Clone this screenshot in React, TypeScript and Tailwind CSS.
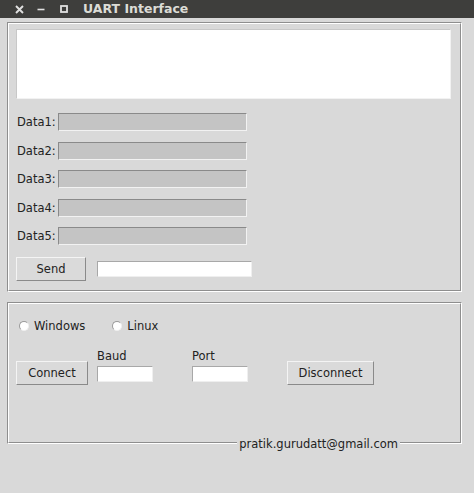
const font = { fontFamily: '"DejaVu Sans", Verdana, sans-serif' };

function Groove({ className = "", children }: { className?: string; children: React.ReactNode }) {
  return (
    <div className={`relative border border-t-[#8e8e8e] border-l-[#8e8e8e] border-b-white border-r-white ${className}`}>
      <div className="h-full border border-t-white border-l-white border-b-[#8e8e8e] border-r-[#8e8e8e]">{children}</div>
    </div>
  );
}

function DataRow({ label }: { label: string }) {
  return (
    <div className="flex items-center h-[18px]">
      <span className="w-[42px] pl-[1px] leading-[14px]">{label}</span>
      <div className="w-[189px] h-[18px] bg-[#c4c4c4] border border-t-[#8a8a8a] border-l-[#8a8a8a] border-b-[#f2f2f2] border-r-[#f2f2f2]" />
    </div>
  );
}

function TkButton({ label, w }: { label: string; w: string }) {
  return (
    <button
      className={`${w} h-[24px] shrink-0 bg-[#dadada] border border-t-[#f4f4f4] border-l-[#f4f4f4] border-b-[#8a8a8a] border-r-[#8a8a8a] text-[#222] leading-[14px]`}
    >
      {label}
    </button>
  );
}

function WhiteEntry({ w, h }: { w: string; h: string }) {
  return <div className={`${w} ${h} bg-white border border-t-[#a8a8a8] border-l-[#a8a8a8] border-b-[#efefef] border-r-[#efefef]`} />;
}

function Radio({ label }: { label: string }) {
  return (
    <div className="flex items-center">
      <span className="w-[10px] h-[10px] rounded-full bg-white border border-t-[#9a9a9a] border-l-[#9a9a9a] border-b-[#f0f0f0] border-r-[#f0f0f0]" />
      <span className="ml-[5px] leading-[14px]">{label}</span>
    </div>
  );
}

export default function App() {
  return (
    <div className="w-[474px] h-[493px] bg-[#d9d9d9] text-[11.5px] text-[#222] overflow-hidden" style={font}>
      {/* title bar */}
      <div className="h-[18px] bg-[#3e3e3c] flex items-center text-[#dcdcd6]">
        <svg width="9" height="9" viewBox="0 0 9 9" className="ml-[15px]">
          <path d="M1 1 L8 8 M8 1 L1 8" stroke="#e0e0e0" strokeWidth="1.9" />
        </svg>
        <svg width="8" height="8" viewBox="0 0 8 8" className="ml-[13px]">
          <path d="M0.5 4.5 H7.5" stroke="#e0e0e0" strokeWidth="1.6" />
        </svg>
        <svg width="8" height="8" viewBox="0 0 8 8" className="ml-[15px]">
          <rect x="1" y="1" width="6" height="6" fill="none" stroke="#e0e0e0" strokeWidth="1.8" />
        </svg>
        <span className="ml-[15px] font-bold text-[12.5px] leading-[16px]">UART Interface</span>
      </div>

      <div className="pt-[4px] pl-[7px]">
        {/* top frame */}
        <Groove className="w-[455px]">
          <div className="pt-[5px] pl-[7px] pb-[9px]">
            <div className="w-[435px] h-[70px] bg-white border border-t-[#c8c8c8] border-l-[#c8c8c8] border-b-[#f2f2f2] border-r-[#f2f2f2]" />
            <div className="mt-[14px] flex flex-col gap-[10.5px]">
              <DataRow label="Data1:" />
              <DataRow label="Data2:" />
              <DataRow label="Data3:" />
              <DataRow label="Data4:" />
              <DataRow label="Data5:" />
            </div>
            <div className="mt-[12px] flex items-center">
              <TkButton label="Send" w="w-[70px]" />
              <div className="ml-[11px]">
                <WhiteEntry w="w-[155px]" h="h-[16px]" />
              </div>
            </div>
          </div>
        </Groove>

        {/* bottom frame */}
        <Groove className="w-[455px] h-[142px] mt-[10px]">
          <div className="pt-[15px] pl-[7px]">
            <div className="flex items-center pl-[3px]">
              <Radio label="Windows" />
              <div className="ml-[27px]">
                <Radio label="Linux" />
              </div>
            </div>
            <div className="mt-[16px] flex items-start">
              <div className="mt-[12px]">
                <TkButton label="Connect" w="w-[72px]" />
              </div>
              <div className="ml-[9px] flex flex-col">
                <span className="leading-[14px]">Baud</span>
                <div className="mt-[3px]">
                  <WhiteEntry w="w-[56px]" h="h-[16px]" />
                </div>
              </div>
              <div className="ml-[39px] flex flex-col">
                <span className="leading-[14px]">Port</span>
                <div className="mt-[3px]">
                  <WhiteEntry w="w-[56px]" h="h-[16px]" />
                </div>
              </div>
              <div className="ml-[39px] mt-[12px]">
                <TkButton label="Disconnect" w="w-[87px]" />
              </div>
            </div>
          </div>
          <span className="absolute right-[61px] bottom-[-8px] px-[2px] bg-[#d9d9d9] leading-[14px]">
            pratik.gurudatt@gmail.com
          </span>
        </Groove>
      </div>
    </div>
  );
}
